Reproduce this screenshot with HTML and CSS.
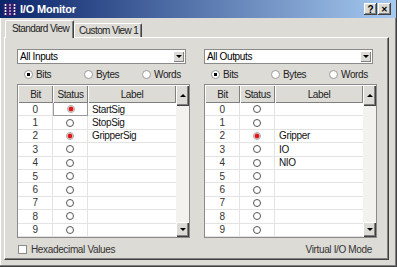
FILE: index.html
```html
<!DOCTYPE html>
<html lang="en">
  <head>
    <meta charset="UTF-8" />
    <title>I/O Monitor</title>
    <link rel="stylesheet" href="styles.css">
  </head>
  <body>
    <div class="window">
      <div class="titlebar">
        <svg class="app-icon" width="14" height="13" viewBox="0 0 14 13">
          <rect width="14" height="13" fill="#2a1f6e" />
          <circle cx="2.5" cy="2" r="1" fill="#fff" />
          <circle cx="2.5" cy="5" r="1" fill="#fff" />
          <circle cx="2.5" cy="8" r="1" fill="#fff" />
          <circle cx="2.5" cy="11" r="1" fill="#fff" />
          <circle cx="7" cy="2" r="1" fill="#f2a0c8" />
          <circle cx="7" cy="5" r="1" fill="#f2a0c8" />
          <circle cx="7" cy="8" r="1" fill="#f2a0c8" />
          <circle cx="7" cy="11" r="1" fill="#f2a0c8" />
          <circle cx="11.5" cy="2" r="1" fill="#fff" />
          <circle cx="11.5" cy="5" r="1" fill="#fff" />
          <circle cx="11.5" cy="8" r="1" fill="#fff" />
          <circle cx="11.5" cy="11" r="1" fill="#fff" />
        </svg>
        <span class="title">I/O Monitor</span>
        <span class="cbtn">?</span>
        <span class="cbtn">&#x2715;</span>
      </div>

      <div class="main">
        <div class="tabs">
          <div class="tab active">Standard View</div>
          <div class="tab">Custom View 1</div>
        </div>

        <div class="panel">
          <div class="panes">
            <!-- inputs -->
            <div class="pane">
              <div class="select"><span class="txt">All Inputs</span><span class="drop"><i class="ar-down"></i></span></div>
              <div class="radios">
                <label class="opt"><span class="rb on"></span>Bits</label>
                <label class="opt w2"><span class="rb"></span>Bytes</label>
                <label class="opt w3"><span class="rb"></span>Words</label>
              </div>
              <div class="grid">
                <div class="grid-main">
                  <div class="head"><div class="c1">Bit</div><div class="c2">Status</div><div class="c3">Label</div></div>
                  <div class="row"><div class="c1">0</div><div class="c2 focus"><span class="led on"></span></div><div class="c3">StartSig</div></div>
                  <div class="row"><div class="c1">1</div><div class="c2"><span class="led"></span></div><div class="c3">StopSig</div></div>
                  <div class="row"><div class="c1">2</div><div class="c2"><span class="led on"></span></div><div class="c3">GripperSig</div></div>
                  <div class="row"><div class="c1">3</div><div class="c2"><span class="led"></span></div><div class="c3"></div></div>
                  <div class="row"><div class="c1">4</div><div class="c2"><span class="led"></span></div><div class="c3"></div></div>
                  <div class="row"><div class="c1">5</div><div class="c2"><span class="led"></span></div><div class="c3"></div></div>
                  <div class="row"><div class="c1">6</div><div class="c2"><span class="led"></span></div><div class="c3"></div></div>
                  <div class="row"><div class="c1">7</div><div class="c2"><span class="led"></span></div><div class="c3"></div></div>
                  <div class="row"><div class="c1">8</div><div class="c2"><span class="led"></span></div><div class="c3"></div></div>
                  <div class="row"><div class="c1">9</div><div class="c2"><span class="led"></span></div><div class="c3"></div></div>
                </div>
                <div class="vscroll">
                  <div class="sbtn up"><i class="ar-up"></i></div>
                  <div class="track"></div>
                  <div class="sbtn"><i class="ar-down"></i></div>
                </div>
              </div>
            </div>

            <!-- outputs -->
            <div class="pane">
              <div class="select"><span class="txt">All Outputs</span><span class="drop"><i class="ar-down"></i></span></div>
              <div class="radios">
                <label class="opt"><span class="rb on"></span>Bits</label>
                <label class="opt w2"><span class="rb"></span>Bytes</label>
                <label class="opt w3"><span class="rb"></span>Words</label>
              </div>
              <div class="grid">
                <div class="grid-main">
                  <div class="head"><div class="c1">Bit</div><div class="c2">Status</div><div class="c3">Label</div></div>
                  <div class="row"><div class="c1">0</div><div class="c2"><span class="led"></span></div><div class="c3"></div></div>
                  <div class="row"><div class="c1">1</div><div class="c2"><span class="led"></span></div><div class="c3"></div></div>
                  <div class="row"><div class="c1">2</div><div class="c2"><span class="led on"></span></div><div class="c3">Gripper</div></div>
                  <div class="row"><div class="c1">3</div><div class="c2"><span class="led"></span></div><div class="c3">IO</div></div>
                  <div class="row"><div class="c1">4</div><div class="c2"><span class="led"></span></div><div class="c3">NIO</div></div>
                  <div class="row"><div class="c1">5</div><div class="c2"><span class="led"></span></div><div class="c3"></div></div>
                  <div class="row"><div class="c1">6</div><div class="c2"><span class="led"></span></div><div class="c3"></div></div>
                  <div class="row"><div class="c1">7</div><div class="c2"><span class="led"></span></div><div class="c3"></div></div>
                  <div class="row"><div class="c1">8</div><div class="c2"><span class="led"></span></div><div class="c3"></div></div>
                  <div class="row"><div class="c1">9</div><div class="c2"><span class="led"></span></div><div class="c3"></div></div>
                </div>
                <div class="vscroll">
                  <div class="sbtn up"><i class="ar-up"></i></div>
                  <div class="track"></div>
                  <div class="sbtn"><i class="ar-down"></i></div>
                </div>
              </div>
            </div>
          </div>

          <div class="footer">
            <label class="hex"><span class="check"></span>Hexadecimal Values</label>
            <span class="mode">Virtual I/O Mode</span>
          </div>
        </div>
      </div>
    </div>
  </body>
</html>
```

FILE: styles.css
```css
* {
  margin: 0;
  padding: 0;
  box-sizing: border-box;
}
body {
  font-family: "Liberation Sans", Arial, sans-serif;
  font-size: 10px;
  letter-spacing: -0.35px;
  color: #000;
  background-color: #dddbd6;
  white-space: nowrap;
}
.window {
  width: 397px;
  height: 267px;
  background-color: #dddbd6;
  border-right: 1px solid #404040;
  border-bottom: 1px solid #404040;
  box-shadow: inset -1px -1px #808080, inset 1px 1px #fff;
}
.titlebar {
  height: 18px;
  display: flex;
  align-items: center;
  padding: 0 5px 0 3px;
  background: linear-gradient(to right, #0a246a, #a6caf0);
  color: #fff;
}
.app-icon {
  margin-right: 3px;
}
.title {
  flex: 1;
  font-size: 11px;
  font-weight: bold;
  letter-spacing: -0.2px;
}
.cbtn {
  width: 13px;
  height: 12px;
  display: flex;
  align-items: center;
  justify-content: center;
  background-color: #dddbd6;
  box-shadow: inset -1px -1px #404040, inset 1px 1px #fff, inset -2px -2px #808080;
  color: #000;
  font-size: 10px;
  font-weight: bold;
}
.cbtn + .cbtn {
  margin-left: 1px;
  font-size: 8px;
}
.main {
  padding: 2px 7px 0 4px;
}
.tabs {
  height: 17px;
  display: flex;
  align-items: flex-end;
  padding-left: 1px;
}
.tab {
  width: 68px;
  height: 14px;
  padding-left: 4px;
  line-height: 13px;
  letter-spacing: -0.6px;
  border-top: 1px solid #fff;
  border-left: 1px solid #fff;
  border-right: 1px solid #404040;
  border-radius: 2px 2px 0 0;
  box-shadow: inset -1px 0 #808080;
  color: #222;
}
.tab.active {
  width: 69px;
  height: 18px;
  padding-left: 6px;
  line-height: 16px;
  margin-bottom: -1px;
  position: relative;
  z-index: 1;
  background-color: #dddbd6;
}
.panel {
  height: 223px;
  padding: 11px 0 0 12px;
  border: 1px solid;
  border-color: #fff #404040 #404040 #fff;
  box-shadow: inset -1px -1px #808080;
}
.panes {
  display: flex;
  gap: 14px;
}
.pane {
  width: 173px;
}
.select {
  width: 169px;
  height: 15px;
  display: flex;
  align-items: center;
  padding-left: 2px;
  background-color: #fff;
  border: 1px solid #8a8a8a;
}
.select .txt {
  flex: 1;
}
.drop {
  width: 11px;
  height: 11px;
  margin-right: 1px;
  display: flex;
  align-items: center;
  justify-content: center;
  background-color: #dddbd6;
  box-shadow: inset 1px 1px #fff, inset -1px -1px #808080;
}
.radios {
  height: 20px;
  display: flex;
  align-items: center;
  padding-left: 7px;
}
.opt {
  width: 60px;
  display: flex;
  align-items: center;
  gap: 3px;
  color: #222;
}
.opt.w2 {
  width: 58px;
}
.opt.w3 {
  width: auto;
}
.rb {
  width: 9px;
  height: 9px;
  border-radius: 50%;
  background-color: #fff;
  border: 1px solid #9a9a9a;
}
.rb.on {
  background: radial-gradient(circle, #000 0 1.5px, #fff 2px);
}
.grid {
  width: 173px;
  height: 154px;
  display: flex;
  border: 1px solid #8a8a8a;
}
.grid-main {
  width: 158px;
  background-color: #fff;
}
.head {
  height: 18px;
  display: flex;
}
.head div {
  display: flex;
  align-items: center;
  justify-content: center;
  background-color: #dddbd6;
  box-shadow: inset 1px 1px #fff, inset -1px -1px #808080;
  color: #222;
}
.c1 {
  width: 35px;
}
.c2 {
  width: 35px;
}
.c3 {
  width: 88px;
}
.row {
  height: 13.4px;
  display: flex;
}
.row div {
  display: flex;
  align-items: center;
  justify-content: center;
  border-right: 1px solid #e3e3e3;
  border-bottom: 1px solid #e3e3e3;
  color: #333;
}
.row .c3 {
  justify-content: flex-start;
  padding-left: 4px;
  border-right: 0;
  color: #111;
}
.row .focus {
  border: 1px solid #9a9a9a;
  border-top: 0;
}
.led {
  width: 8px;
  height: 8px;
  border-radius: 50%;
  background-color: #fff;
  border: 1px solid #555;
}
.led.on {
  border-color: #a8a8a8;
  background: radial-gradient(circle, #e01818 0 2px, #f3b0b0 2.6px, #fff 3.2px);
}
.vscroll {
  width: 13px;
  display: flex;
  flex-direction: column;
  background-color: #f3f2ef;
}
.sbtn {
  height: 15px;
  display: flex;
  align-items: center;
  justify-content: center;
  background-color: #dddbd6;
  box-shadow: inset 1px 1px #fff, inset -1px -1px #404040, inset -2px -2px #808080;
}
.sbtn.up {
  height: 21px;
}
.track {
  flex: 1;
}
.ar-up {
  border-left: 3px solid transparent;
  border-right: 3px solid transparent;
  border-bottom: 3px solid #000;
}
.ar-down {
  border-left: 3px solid transparent;
  border-right: 3px solid transparent;
  border-top: 3px solid #000;
}
.footer {
  height: 21px;
  display: flex;
  align-items: center;
  justify-content: space-between;
  padding: 2px 16px 0 1px;
  color: #333;
}
.hex {
  display: flex;
  align-items: center;
}
.check {
  width: 9px;
  height: 9px;
  margin-right: 4px;
  background-color: #fff;
  border: 1px solid #8a8a8a;
}
```
